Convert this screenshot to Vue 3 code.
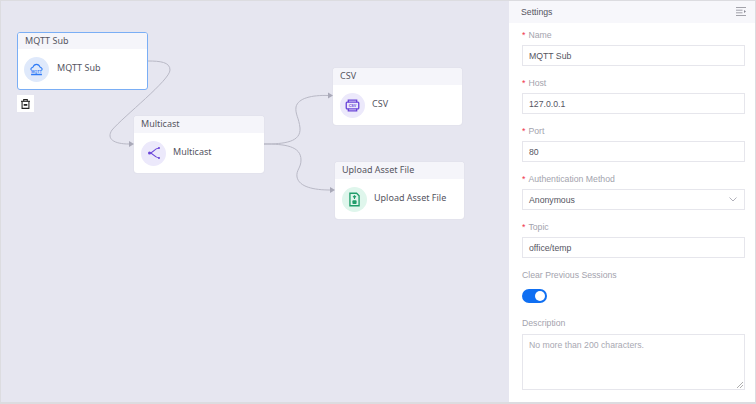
<script setup>
const nodes = [
  { id: 'mqtt', title: 'MQTT Sub', x: 17, y: 32, w: 131, kind: 'blue', active: true },
  { id: 'multicast', title: 'Multicast', x: 134, y: 116, w: 130, kind: 'purple' },
  { id: 'csv', title: 'CSV', x: 333, y: 68, w: 129, kind: 'purple' },
  { id: 'upload', title: 'Upload Asset File', x: 335, y: 162, w: 129, kind: 'green' }
]

const edges = [
  'M148 61 C160 61 170 62 170 70 C170 80 124 116 112 130 C106 139 114 144 129 144',
  'M264 144 C285 144 301 142 300 128 C299 118 295 114 296 107 C298 98 312 95 328 95.500',
  'M264 144 C285 144 301 146 301 160 C301 168 296 170 297 177 C299 187 314 190 330 190'
]

const arrows = ['129,141 134,144 129,147', '328,92.500 333,95.500 328,98.500', '330,187 335,190 330,193']

const fields = [
  { label: 'Name', value: 'MQTT Sub' },
  { label: 'Host', value: '127.0.0.1' },
  { label: 'Port', value: '80' },
  { label: 'Authentication Method', value: 'Anonymous', select: true },
  { label: 'Topic', value: 'office/temp' }
]
</script>

<template>
  <div class="page">
    <div class="canvas">
      <svg class="edges" width="508" height="402" viewBox="0 0 508 402">
        <path v-for="d in edges" :key="d" :d="d" class="edge" />
        <polygon v-for="p in arrows" :key="p" :points="p" class="arrow" />
      </svg>

      <div
        v-for="node in nodes"
        :key="node.id"
        class="node"
        :class="{ active: node.active }"
        :style="{ left: node.x + 'px', top: node.y + 'px', width: node.w + 'px' }"
      >
        <div class="node-head">{{ node.title }}</div>
        <div class="node-body">
          <span class="node-icon" :class="node.kind">
            <svg v-if="node.id === 'mqtt'" width="15" height="15" viewBox="0 0 18 18" fill="none" stroke="#2f7bf6" stroke-width="1.300">
              <path d="M3 10 C1.500 8.500 2.500 6.500 4.500 6.500 C5.500 4 7.500 2.800 9 2.800 C11 2.800 12.500 4 13.500 6.500 C15.500 6.500 16.500 8.500 15 10" />
              <text x="9" y="12.800" text-anchor="middle" class="mini" fill="#2f7bf6" stroke="none">MQTT</text>
              <path d="M2.500 15 H15.500" stroke-width="1.600" />
            </svg>
            <svg v-else-if="node.id === 'multicast'" width="18" height="18" viewBox="0 0 18 18" fill="none" stroke="#6a45d8" stroke-width="1.100">
              <path d="M5 9 C8 9 9 4.500 14 4 M5 9 C8 9 9 13.500 14 14" />
              <circle cx="4.500" cy="9" r="1.500" fill="#6a45d8" stroke="none" />
              <circle cx="14" cy="4" r="1" fill="#6a45d8" stroke="none" />
              <circle cx="14" cy="14" r="1" fill="#6a45d8" stroke="none" />
            </svg>
            <svg v-else-if="node.id === 'csv'" width="15" height="15" viewBox="0 0 18 18" fill="none" stroke="#6a45d8" stroke-width="1.600">
              <path d="M4 5 V2.500 H14 V5" />
              <rect x="1.500" y="5" width="15" height="8" rx="1" />
              <path d="M4 13 V15.500 H14 V13" />
              <text x="9" y="10.800" text-anchor="middle" class="mini" fill="#6a45d8" stroke="none">CSV</text>
            </svg>
            <svg v-else width="15" height="15" viewBox="0 0 18 18" fill="none" stroke="#1f9d6a" stroke-width="1.600">
              <path d="M3.500 1.500 H11.500 L14.500 4.500 V16.500 H3.500 Z" />
              <path d="M9 4.500 V8.500 M7.200 6.200 L9 4.500 L10.800 6.200" stroke-width="1.300" />
              <rect x="6.500" y="10" width="5" height="4.500" rx="1" fill="#1f9d6a" stroke="none" />
            </svg>
          </span>
          <span class="node-name">{{ node.title }}</span>
        </div>
      </div>

      <button class="trash" type="button">
        <svg width="9" height="10" viewBox="0 0 10 11" fill="none" stroke="#222" stroke-width="1.200">
          <path d="M0 2.500 H10" />
          <path d="M3 2.500 V.600 H7 V2.500" />
          <path d="M1.200 2.500 V10.400 H8.800 V2.500" />
          <path d="M3 6.500 H7" stroke-width="2" />
        </svg>
      </button>
    </div>

    <aside class="panel">
      <header class="panel-head">
        <span>Settings</span>
        <svg width="10" height="9" viewBox="0 0 10 9" fill="none" stroke="#8b8b95" stroke-width="0.800">
          <path d="M0 .500 H10 M0 3.200 H6.500 M0 5.800 H6.500 M0 8.500 H10" />
          <polygon points="8,3 10,4.500 8,6" fill="#8b8b95" stroke="none" />
        </svg>
      </header>

      <form class="form">
        <div v-for="f in fields" :key="f.label" class="field">
          <label class="label"><i class="req">*</i>{{ f.label }}</label>
          <div class="input">
            <span>{{ f.value }}</span>
            <svg v-if="f.select" width="8" height="5" viewBox="0 0 8 5" fill="none" stroke="#a8a8b2" stroke-width="0.900">
              <path d="M.500 .500 L4 4 L7.500 .500" />
            </svg>
          </div>
        </div>

        <div class="field switch-field">
          <label class="label">Clear Previous Sessions</label>
          <span class="switch"><span class="knob"></span></span>
        </div>

        <div class="field last">
          <label class="label">Description</label>
          <div class="textarea">
            No more than 200 characters.
            <svg class="grip" width="7" height="7" viewBox="0 0 7 7" stroke="#8b8b8b" stroke-width="0.700">
              <path d="M1 7 L7 1 M4 7 L7 4" />
            </svg>
          </div>
        </div>
      </form>
    </aside>
  </div>
</template>

<style>
html, body {
  margin: 0;
  background: #fff;
}
</style>

<style scoped>
.page {
  width: 756px;
  height: 404px;
  box-sizing: border-box;
  display: flex;
  border: 1px solid #dcdce0;
  border-bottom-width: 2px;
  overflow: hidden;
  font-family: "Liberation Sans", Arial, sans-serif;
}

.canvas {
  position: relative;
  width: 508px;
  flex: none;
  background: #e6e6f0;
}

.canvas > .node,
.canvas > .trash {
  margin-left: -1px;
  margin-top: -1px;
}

.edges {
  position: absolute;
  left: -1px;
  top: -1px;
}

.edge {
  fill: none;
  stroke: #b9b9c6;
  stroke-width: 1;
}

.arrow {
  fill: #a9a9b8;
}

.node {
  position: absolute;
  box-sizing: border-box;
  height: 57px;
  background: #fff;
  border-radius: 3px;
  overflow: hidden;
  box-shadow: 0 0 1px rgba(120, 120, 150, 0.25);
  font-family: "Noto Sans", sans-serif;
  color: #55555f;
}

.node.active {
  height: 58px;
  border: 1px solid #7aaef5;
  box-shadow: none;
}

.node-head {
  height: 17px;
  line-height: 15px;
  padding-left: 7px;
  font-size: 9px;
  background: #f5f5fa;
  white-space: nowrap;
}

.active .node-head {
  height: 16px;
}

.node-body {
  display: flex;
  align-items: center;
  gap: 7px;
  height: 40px;
  padding-left: 7px;
  font-size: 9px;
}

.active .node-body {
  gap: 8px;
  padding-left: 6px;
}

.node-name {
  margin-bottom: 3px;
}

.node-icon {
  width: 25px;
  height: 25px;
  border-radius: 50%;
  display: flex;
  align-items: center;
  justify-content: center;
  flex: none;
}

.node-icon.blue {
  background: #dfe9fb;
}

.node-icon.purple {
  background: #ece9fb;
}

.node-icon.green {
  background: #dff6ec;
}

.mini {
  font-family: "Liberation Sans", sans-serif;
  font-size: 4.500px;
  font-weight: 700;
}

.trash {
  position: absolute;
  left: 17px;
  top: 95px;
  width: 17px;
  height: 17px;
  padding: 0;
  border: none;
  background: #fff;
  display: flex;
  align-items: center;
  justify-content: center;
}

.panel {
  flex: 1;
  background: #fff;
  display: flex;
  flex-direction: column;
}

.panel-head {
  box-sizing: border-box;
  height: 22px;
  flex: none;
  display: flex;
  align-items: center;
  justify-content: space-between;
  padding: 0 9px 1px 12px;
  background: #f7f7fb;
  font-size: 8.700px;
  color: #55555f;
}

.form {
  padding: 4px 10px 0 13px;
}

.field {
  margin-bottom: 9px;
}

.label {
  display: block;
  height: 14px;
  line-height: 16px;
  margin-bottom: 4px;
  font-size: 8.700px;
  color: #a3a3ad;
}

.req {
  font-style: normal;
  color: #f0344a;
  margin-right: 3px;
}

.input {
  box-sizing: border-box;
  height: 21px;
  display: flex;
  align-items: center;
  justify-content: space-between;
  padding: 0 7px 0 6px;
  border: 1px solid #e6e6ec;
  font-size: 8.700px;
  color: #55555f;
}

.switch-field {
  margin-bottom: 12px;
}

.switch-field .label {
  margin-bottom: 8px;
}

.last .label {
  margin-bottom: 5px;
}

.switch {
  display: block;
  box-sizing: border-box;
  width: 25px;
  height: 14px;
  padding: 2px;
  border-radius: 7px;
  background: #0f6ff2;
}

.knob {
  display: block;
  width: 10px;
  height: 10px;
  margin-left: 11px;
  border-radius: 50%;
  background: #fff;
}

.textarea {
  position: relative;
  box-sizing: border-box;
  height: 56px;
  padding: 3px 6px;
  border: 1px solid #e6e6ec;
  line-height: 14px;
  font-size: 8.700px;
  color: #a8a8b2;
}

.grip {
  position: absolute;
  right: 1px;
  bottom: 1px;
}
</style>
